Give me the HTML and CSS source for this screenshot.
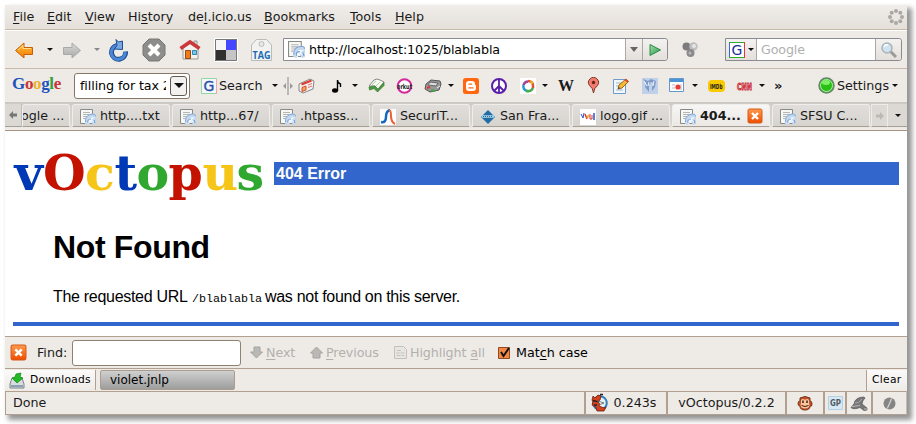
FILE: index.html
```html
<!DOCTYPE html>
<html lang="en">
<head>
<meta charset="utf-8">
<title>404 Error</title>
<link rel="stylesheet" href="styles.css">
</head>
<body>
<svg class="defs" width="0" height="0">
  <defs>
    <linearGradient id="orange" x2="0" y2="1"><stop stop-color="#ffc23d"/><stop offset="1" stop-color="#f57900"/></linearGradient>
    <linearGradient id="grey" x2="0" y2="1"><stop stop-color="#d8d8d6"/><stop offset="1" stop-color="#aaaaa8"/></linearGradient>
    <linearGradient id="green" x2="1" y2="1"><stop stop-color="#a3dfa8"/><stop offset="1" stop-color="#23974a"/></linearGradient>
    <linearGradient id="red" x2="0" y2="1"><stop stop-color="#ff9a4d"/><stop offset="1" stop-color="#ee4d00"/></linearGradient>
    <symbol id="page" viewBox="0 0 16 16">
      <path d="M.500.500h12v14H.500z" fill="#f7f7f5" stroke="#888a85"/>
      <path d="M3 3.500h7M3 5.500h7M3 7.500h4M3 9.500h2" stroke="#b5b5b3"/>
      <path d="M5 15q-1-8 5-10 4-1 6 2v8l-3 1-2-4-3 4z" fill="#c3d8ef"/>
      <path d="M5.500 13Q5 7 10 5.500t6 2" stroke="#84a9d4" fill="none"/>
      <path d="M9 9.500q3-2 6-1l-3 2 3 3.500-4-2-2 3-2-1z" fill="#f0f7fd"/><path d="M8 14q-1-4 3-4M14 11l1 3" stroke="#6f9ace" fill="none"/>
    </symbol>
    <symbol id="close" viewBox="0 0 16 16">
      <rect x="1" y="1" width="14" height="14" rx="1.500" fill="url(#red)" stroke="#d65a18"/>
      <path d="M5 5l6 6m0-6l-6 6" stroke="#fff" stroke-width="2.400"/>
    </symbol>
  </defs>
</svg>
<div class="window">
  <nav class="menu">
    <span><u>F</u>ile</span><span><u>E</u>dit</span><span><u>V</u>iew</span><span>Hi<u>s</u>tory</span><span>de<u>l</u>.icio.us</span><span><u>B</u>ookmarks</span><span><u>T</u>ools</span><span><u>H</u>elp</span>
    <svg width="16" height="16" viewBox="0 0 16 16"><g fill="#aaa8a5"><circle cx="8" cy="2" r="2"/><circle cx="12.300" cy="3.700" r="2"/><circle cx="14" cy="8" r="2"/><circle cx="12.300" cy="12.300" r="2"/><circle cx="8" cy="14" r="2"/><circle cx="3.700" cy="12.300" r="2"/><circle cx="2" cy="8" r="2"/><circle cx="3.700" cy="3.700" r="2"/></g></svg>
  </nav>

  <div class="toolbar">
    <svg width="22" height="20" viewBox="0 0 22 20"><path d="M1.500 10.500L10 3v4.500h8.500v7H10V18z" fill="url(#orange)" stroke="#c65f08"/><path d="M4 10l5-4.500v3h8" stroke="#ffdc8a" fill="none"/></svg>
    <i class="caret"></i>
    <svg width="22" height="20" viewBox="0 0 22 20"><path d="M18.500 10.500L10 3v4.500H1.500v7H10V18z" fill="url(#grey)" stroke="#a9a9a7"/></svg>
    <i class="caret dim"></i>
    <svg width="22" height="24" viewBox="0 0 22 24"><path d="M17.500 13.500A7 7 0 1 1 9 7.500" fill="none" stroke="#1d4e94" stroke-width="5"/><path d="M17.200 14A7 7 0 1 1 9 7.500" fill="none" stroke="#4c86d4" stroke-width="3"/><path d="M8 1.500l2.500 2.500 4-1v8.500L6.500 11l2.500-3.500z" fill="#7aa7e2" stroke="#1d4e94"/></svg>
    <svg width="24" height="24" viewBox="0 0 24 24"><path d="M7 1h10l6 6v10l-6 6H7l-6-6V7z" fill="#8d8d8b" stroke="#777775"/><path d="M7 7l10 10m0-10L7 17" stroke="#fff" stroke-width="4"/></svg>
    <svg width="22" height="24" viewBox="0 0 22 24"><path d="M4 10v11h15V10l-8-6z" fill="#f4f2ee" stroke="#999"/><path d="M15 3h3v5h-3z" fill="#ddd" stroke="#999"/><path d="M1.500 10.500L11 4l9.500 6.500" fill="none" stroke="#c9383b" stroke-width="3.600"/><path d="M6.500 12.500h5v8h-5z" fill="#ee7c19" stroke="#944a12"/><path d="M13.500 12.500h4v4h-4z" fill="#75c8ef" stroke="#3485b4"/></svg>
    <svg width="24" height="24" viewBox="0 0 24 24"><path d="M0 0h24v24H0z" fill="#fff"/><path d="M1 1h11v11H1z" fill="#f5f5f5"/><path d="M12 1h11v11H12z" fill="#4548ff"/><path d="M1 12h11v11H1z" fill="#303030"/><path d="M12 12h11v11H12z" fill="#c5c5c5"/><path d="M1.500 1.500h21v21h-21z" fill="none" stroke="#777"/></svg>
    <svg width="24" height="24" viewBox="0 0 24 24"><path d="M1.500 7l5-5.500h10l5 5.500v15.500h-20z" fill="#f2f2f1" stroke="#bbb"/><circle cx="11.500" cy="6" r="2.500" fill="#e8e8e6" stroke="#bbb"/><text x="2.500" y="20.500" class="tag-text" textLength="18" lengthAdjust="spacingAndGlyphs">TAG</text></svg>
    <div class="address">
      <svg width="17" height="17"><use href="#page"/></svg><span>http://localhost:1025/blablabla</span>
      <div class="button drop"><i class="caret grey-caret"></i></div>
      <div class="button go"><svg width="13" height="14" viewBox="0 0 13 14"><path d="M1 1.500l10.500 5.500L1 12.500z" fill="url(#green)" stroke="#2b8a45"/></svg></div>
    </div>
    <svg width="17" height="16" viewBox="0 0 17 16"><circle cx="4.500" cy="4.500" r="4" fill="#7c7c7c"/><circle cx="11.500" cy="4.500" r="4.200" fill="#bdbdbd"/><circle cx="8.500" cy="11" r="4" fill="#8a8a8a"/><circle cx="12" cy="4" r="2" fill="#e6e6e6"/><circle cx="8" cy="11" r="1.500" fill="#b8b8b8"/></svg>
    <div class="search">
      <div class="button engine"><svg width="16" height="16" viewBox="0 0 16 16"><path d="M0 0h16v16H0z" fill="#fff"/><path d="M.5 16V.5" stroke="#3b67d6"/><path d="M0 .5h16M0 15.500h16" stroke="#33a833"/><path d="M15.500 0v16" stroke="#e33"/><text x="8" y="13" class="g-letter">G</text></svg><i class="caret"></i></div>
      <span>Google</span>
      <div class="button find-button"><svg width="18" height="18" viewBox="0 0 18 18"><path d="M10 10l6 6" stroke="#999b98" stroke-width="3"/><circle cx="7" cy="7" r="5" fill="#cfe3ef" stroke="#a9b4ba" stroke-width="1.500"/><path d="M4 6q1-3 4-2" stroke="#fff" stroke-width="1.500" fill="none"/></svg></div>
    </div>
  </div>

  <div class="google-bar">
    <div class="google-logo"><b class="b">G</b><b class="r">o</b><b class="y">o</b><b class="b">g</b><b class="n">l</b><b class="r">e</b></div>
    <div class="query"><span>filling for tax 2</span><div class="combo"><i class="caret big"></i></div></div>
    <svg width="16" height="16" viewBox="0 0 16 16"><path d="M.5.500h15v15H.5z" fill="#f4f7fd" stroke="#91d99e"/><path d="M15.500 1v15" stroke="#f2a6a6"/><text x="8" y="13" class="g-letter soft">G</text></svg>
    <span>Search</span>
    <i class="caret"></i>
    <svg width="10" height="18" viewBox="0 0 10 18"><path d="M5 0v18" stroke="#888"/><path d="M3 6v6L0 9zM7 6v6l3-3z" fill="#999"/></svg>
    <svg width="17" height="16" viewBox="0 0 17 16"><path d="M1 6l11-5 4 2-1 8-10 4-4-2z" fill="#f1f1f1" stroke="#888"/><path d="M3.500 6.500l10-4" stroke="#dc3b2d" stroke-width="2"/><path d="M4 9.500l4-1.500v4l-4 1.500z" stroke="#dc4b3d" fill="#f0a94c"/><path d="M10 7l4-1.500M10 9.500l4-1.500" stroke="#e0726a"/></svg>
    <svg width="11" height="16" viewBox="0 0 11 16"><ellipse cx="3" cy="12.500" rx="3" ry="2.200"/><path d="M5.500 13V2q0 3 3 4v3" stroke="#000" stroke-width="1.400" fill="none"/></svg>
    <i class="caret"></i>
    <svg width="17" height="16" viewBox="0 0 17 16"><path d="M1 8l5-6q3-2 6 0l4 2-6 7-3-3z" fill="#f5faf1" stroke="#888"/><path d="M1 9l6-1 2.500 4L16 4.500v3L9.500 14 6 10.500 1.500 12z" fill="#44a23b" stroke="#38702e" stroke-width=".7"/><path d="M4 7l4-4m0 5l4-4" stroke="#b4cfaf" fill="none"/></svg>
    <svg width="17" height="16" viewBox="0 0 17 16"><circle cx="8.500" cy="8" r="6.800" fill="#fff" stroke="#d42a9b" stroke-width="2"/><text x="1" y="10.500" class="orkut" textLength="15" lengthAdjust="spacingAndGlyphs">orkut</text></svg>
    <svg width="18" height="16" viewBox="0 0 18 16"><path d="M2 6l5-4 9 1 1 3-2 6-9 2-5-3z" fill="#999" stroke="#555"/><path d="M6 4l8 1-2 3-8-1z" fill="#ddd" stroke="#666"/><path d="M3 10l3-1" stroke="#d33" stroke-width="2"/><path d="M7 12l4 1" stroke="#4a4" stroke-width="2"/><path d="M13 10l3-2" stroke="#eee"/></svg>
    <i class="caret"></i>
    <svg width="16" height="16" viewBox="0 0 16 16"><rect width="16" height="16" rx="2.500" fill="#ff6810"/><path d="M6 3h3q3 0 3 3 0 1 1 1.500v2.500q0 3-3 3H6q-3 0-3-3V6q0-3 3-3z" fill="#fff"/><path d="M6 6.200h2.700M6 9.900h4" stroke="#ff6810" stroke-width="1.300" stroke-linecap="round"/></svg>
    <svg width="16" height="16" viewBox="0 0 16 16"><circle cx="8" cy="8" r="7" fill="#fff" stroke="#5a1ea8" stroke-width="2"/><path d="M8 1v14M8 8l-5 5M8 8l5 5" stroke="#5a1ea8" stroke-width="1.800"/></svg>
    <svg width="16" height="16" viewBox="0 0 16 16"><path d="M0 0h16v16H0z" fill="#fff"/><path d="M8 3.500A5 5 0 0 0 3.500 7" stroke="#a2489a" stroke-width="2.500" fill="none"/><path d="M8 3q5 0 5 5v2" stroke="#df5131" stroke-width="2.500" fill="none"/><path d="M3.500 7q-1 5 4 6" stroke="#299ad0" stroke-width="2.500" fill="none"/><path d="M6 13q5 1 7-3" stroke="#4baa4b" stroke-width="2.500" fill="none"/><path d="M10 2l4 3-3 1z" fill="#f4c430"/></svg>
    <i class="caret"></i>
    <b class="wiki">W</b>
    <svg width="13" height="17" viewBox="0 0 13 17"><path d="M6.500 16Q6 11 2.500 8.500A5 5 0 1 1 10.500 8.500Q7 11 6.500 16z" fill="#f47a6c" stroke="#7c3730"/><circle cx="6.500" cy="5.500" r="1.700" fill="#60251d"/></svg>
    <svg width="16" height="16" viewBox="0 0 16 16"><path d="M.500 1.500h12v14H.500z" fill="#f2f7fc" stroke="#719bcd"/><path d="M3 5h6M3 8h4M3 12h7" stroke="#9fb7d1"/><path d="M5 11l1-4 7-6 2.500 2.500L9 10z" fill="#f7bb31" stroke="#98651a"/><path d="M12.500 1.500l2.500 2.500" stroke="#d94b3b" stroke-width="2"/><path d="M5 11l.5-2L7 10z" fill="#333"/></svg>
    <svg width="16" height="16" viewBox="0 0 16 16"><path d="M0 0h16v16H0z" fill="#bfd0e9"/><path d="M1 1l5 2 3-2 5 2-1 6-3 4V9l2-4-3-1-2 3v7l-4-5 1-4z" fill="#7f9bc8"/><path d="M2 3l3 5M7 4L6 8M12 3l-1 5" stroke="#edf3fa"/></svg>
    <svg width="16" height="15" viewBox="0 0 16 15"><path d="M.5.500h14v13H.5z" fill="#fff" stroke="#629acb"/><path d="M1 1h13v3H1z" fill="#4d94d6"/><path d="M3 7h3M3 10h3M12 6v6" stroke="#bbc"/><circle cx="9" cy="9" r="2.600" fill="#e53c37"/></svg>
    <i class="caret"></i>
    <svg width="17" height="12" viewBox="0 0 17 12"><rect width="17" height="12" rx="4" fill="#fac900"/><text x="2" y="8.500" class="imdb" textLength="12.500" lengthAdjust="spacingAndGlyphs">IMDb</text></svg>
    <svg width="17" height="12" viewBox="0 0 17 12"><text x="1" y="9.500" class="cnn" textLength="15" lengthAdjust="spacingAndGlyphs">CNN</text></svg>
    <i class="caret"></i>
    <b class="more">»</b>
    <svg width="17" height="17" viewBox="0 0 17 17"><circle cx="8.500" cy="8.500" r="7.500" fill="#29bf16" stroke="#67866a" stroke-width="1.500"/><circle cx="8.500" cy="8.500" r="6" fill="none" stroke="#b3ecab"/><ellipse cx="8" cy="5.500" rx="4" ry="2.500" fill="#7ef064"/></svg>
    <span>Settings</span>
    <i class="caret"></i>
  </div>

  <div class="tabs">
    <div class="scroll left"><svg width="9" height="8" viewBox="0 0 9 8"><path d="M0 4l4-4v2.500h4v3H4V8z" fill="#777"/></svg></div>
    <div class="tab first"><span>ogle ...</span></div>
    <div class="tab"><svg width="16" height="16"><use href="#page"/></svg><span>http....txt</span></div>
    <div class="tab"><svg width="16" height="16"><use href="#page"/></svg><span>http...67/</span></div>
    <div class="tab"><svg width="16" height="16"><use href="#page"/></svg><span>.htpass...</span></div>
    <div class="tab"><svg width="16" height="16" viewBox="0 0 16 16"><path d="M0 0h16v16H0z" fill="#fff"/><path d="M1 13Q6 14 6 8t4-7" stroke="#1669bd" stroke-width="2.500" fill="none"/><path d="M9 1q2 0 2 6t4 8" stroke="#ec6033" stroke-width="2" fill="none"/></svg><span>SecuriT...</span></div>
    <div class="tab"><svg width="16" height="16" viewBox="0 0 16 16"><path d="M8 1l7 7-7 7-7-7z" fill="#236ca3" stroke="#76a5c7"/><path d="M2 7.500h12" stroke="#a8d3e9" stroke-width="2.500"/><path d="M3 7.500h10" stroke="#316f9b" stroke-dasharray="1 1"/></svg><span>San Fra...</span></div>
    <div class="tab"><svg width="16" height="16" viewBox="0 0 16 16"><path d="M0 0h16v16H0z" fill="#fff"/><path d="M1 5l2 4 1-5" stroke="#2555cb" fill="none"/><path d="M5 5l2 5" stroke="#d33" stroke-width="1.500"/><path d="M7 9l2-3" stroke="#efaf25" stroke-width="2"/><path d="M10 5v5h2V6" stroke="#d33" fill="none"/><path d="M14 4v7" stroke="#2555cb" stroke-width="1.500"/></svg><span>logo.gif ...</span></div>
    <div class="tab active"><svg width="16" height="16"><use href="#page"/></svg><span>404...</span><svg class="shut" width="16" height="16"><use href="#close"/></svg></div>
    <div class="tab"><svg width="16" height="16"><use href="#page"/></svg><span>SFSU C...</span></div>
    <div class="scroll right"><svg width="9" height="8" viewBox="0 0 9 8"><path d="M9 4L5 0v2.500H1v3h4V8z" fill="#bcb9b5"/></svg></div>
    <div class="scroll all"><i class="caret"></i></div>
  </div>

  <main class="page">
    <header>
      <svg width="261" height="62" viewBox="0 0 261 62"><text y="51" class="brand"><tspan x="1.500" fill="#0039b6">v</tspan><tspan x="30" fill="#c41200">O</tspan><tspan x="72" fill="#f5c518">c</tspan><tspan x="101.500" fill="#0039b6">t</tspan><tspan x="123.500" fill="#30a72f">o</tspan><tspan x="155.500" fill="#c41200">p</tspan><tspan x="189.500" fill="#f5c518">u</tspan><tspan x="223.500" fill="#30a72f">s</tspan></text></svg>
      <div class="error-title">404 Error</div>
    </header>
    <section>
      <h1>Not Found</h1>
      <p><span class="lead">The requested URL</span><code>/blablabla</code><span class="tail">was not found on this server.</span></p>
    </section>
    <div class="rule"></div>
  </main>

  <div class="findbar">
    <svg width="17" height="17"><use href="#close"/></svg>
    <span>Find:</span>
    <div class="field"></div>
    <svg width="13" height="13" viewBox="0 0 13 13"><path d="M4 1h6v5h2.500l-6 6-6-6H4z" fill="#bab8b5" stroke="#a5a3a0"/></svg>
    <span class="off"><u>N</u>ext</span>
    <svg width="13" height="13" viewBox="0 0 13 13"><path d="M3 12h7V7h2.500l-6-6-6 6H3z" fill="#bab8b5" stroke="#a5a3a0"/></svg>
    <span class="off"><u>P</u>revious</span>
    <svg width="13" height="13" viewBox="0 0 13 13"><path d="M.5.500h9l3 3v9H.5z" fill="#e8e6e3" stroke="#c3c1be"/><path d="M3 4.500h4M2.500 7h3m1 0h4M2.500 9.500h4m1 0h3" stroke="#c4c2bf"/></svg>
    <span class="off">Highlight <u>a</u>ll</span>
    <svg width="14" height="14" viewBox="0 0 14 14"><path d="M.500 1.500h11v11H.500z" fill="#f58744" stroke="#8f4a25"/><path d="M3 6l2.500 4 5.500-8" stroke="#111" stroke-width="2" fill="none"/></svg>
    <span>Mat<u>c</u>h case</span>
  </div>

  <div class="downloads">
    <div class="label"><svg width="16" height="17" viewBox="0 0 16 17"><path d="M3 6h10l2 6v4H1v-4z" fill="#d8dcde" stroke="#7f8487"/><path d="M2 13h12v2H2z" fill="#8aa2b8"/><path d="M3 6l3-1 1-3 5-1-1 4 3 1-6 5z" fill="#21bb26" stroke="#138518" stroke-width=".7"/></svg><span>Downloads</span></div>
    <div class="file">violet.jnlp</div>
    <div class="clear">Clear</div>
  </div>

  <footer class="status">
    <div>Done</div>
    <div><svg width="17" height="20" viewBox="0 0 17 20"><circle cx="9" cy="10" r="6.800" fill="#e5f1f8" stroke="#347fb8" stroke-width="2"/><path d="M2 3l2 2 3-3 3 1-1 4-3 2 3 1-1 3 5 2 2-1-2 4H6l-1-4-4-2 1-3-1-2z" fill="#d8401a" stroke="#671d12" stroke-width=".8"/><path d="M7 8l6 2-4 1.500z" fill="#f9f6e7" stroke="#333" stroke-width=".6"/><path d="M9 1.500h3M2 7.500l4 1M3 12h3" stroke="#222" stroke-width="1.500"/></svg><span>0.243s</span></div>
    <div><span>vOctopus/0.2.2</span></div>
    <div><svg width="16" height="15" viewBox="0 0 16 15"><path d="M3 2q5-3 10 0v3q2 0 2 3t-2 2q0 4-5 4t-5-4Q1 10 1 7.500T3 5z" fill="#c0532b" stroke="#79331c"/><path d="M4 4q2-2 4 0 2-2 4 0v3q2 5-4 5.500Q2 12 4 7z" fill="#ffc39a"/><path d="M6 4.500v2.500m4-2.500v2.500" stroke="#111" stroke-width="1.300"/><path d="M4.500 9.500q3.500 2 7 0" stroke="#3d1b12" fill="none"/></svg></div>
    <div><svg width="15" height="14" viewBox="0 0 15 14"><path d="M0 0h15v14H0z" fill="#d5e8f4"/><path d="M.5.500h14v13H.5z" fill="none" stroke="#b4d0e2"/><text x="2" y="10" class="gp" textLength="11" lengthAdjust="spacingAndGlyphs">GP</text></svg></div>
    <div><svg width="18" height="15" viewBox="0 0 18 15"><path d="M4 8Q5 1 14 1l1 1q-3 3-3 6l5 4v2l-3 .500-4-3q-7 2.500-9 0z" fill="#777" stroke="#555" stroke-width=".7"/><path d="M5 7q4 1 7-4" stroke="#aaa" fill="none"/><path d="M2 10.500l8-1M14 13l3 0" stroke="#bbb"/></svg></div>
    <div><svg width="13" height="13" viewBox="0 0 13 13"><circle cx="6.500" cy="6.500" r="6" fill="#858585"/><path d="M8.700 1.500L4.300 11.500" stroke="#d1cfcc" stroke-width="1.300"/></svg></div>
  </footer>
</div>
</body>
</html>
```
FILE: styles.css
```css
* { box-sizing: border-box; }
body {
  margin: 0;
  padding: 5px 0 0 5px;
  height: 424px;
  overflow: hidden;
  background: #fff;
  color: #1a1a1a;
  font: 12.7px/16px "DejaVu Sans", sans-serif;
}
svg { display: block; flex: none; }
.defs { position: absolute; }
u { text-decoration: underline; text-underline-offset: 2px; text-decoration-thickness: 1px; }
.window {
  width: 902px;
  height: 410px;
  background: #eeebe7;
  box-shadow: 4px 4px 5px 1px rgba(0, 0, 0, .42);
}
span { white-space: nowrap; }

.menu {
  display: grid;
  grid-template-columns: 34px 38px 43px 60px 76px 86px 45px 493px 16px;
  align-items: center;
  height: 25px;
  padding-left: 8px;
  background: linear-gradient(#f0edea, #e5dfd9);
  border-bottom: 1px solid #c9bbac;
}

.caret {
  width: 0;
  height: 0;
  border: 3px solid transparent;
  border-top: 3px solid #111;
  border-bottom: 0;
}
.caret.dim { border-top-color: #888; }
.caret.grey-caret { border-width: 5px 4px 0; border-top-color: #666; }
.caret.big { border-width: 5px 5px 0; }

.toolbar {
  display: grid;
  grid-template-columns: 33px 15px 32px 14px 34px 37px 35px 36px 33px 399px 43px 177px;
  align-items: center;
  height: 39px;
  padding-left: 9px;
  border-top: 1px solid #fff;
  border-bottom: 1px solid #c9bbac;
}
.tag-text { font: bold 10px "Open Sans", sans-serif; fill: #1769b5; }
.address, .search {
  display: flex;
  align-items: center;
  height: 23px;
  background: #fff;
  border: 1px solid #8a8a92;
  border-radius: 0 3px 3px 0;
  color: #000;
}
.address { width: 385px; padding-left: 4px; }
.address > span { margin-left: 4px; flex: 1; letter-spacing: -.12px; }
.button {
  display: flex;
  align-items: center;
  justify-content: center;
  height: 21px;
  background: linear-gradient(#f4f2f0, #e3dfdb);
  border-left: 1px solid #aaa7a5;
}
.drop { width: 17px; }
.go { width: 25px; border-radius: 0 3px 3px 0; }
.search { width: 177px; }
.search > span { flex: 1; color: #b0b0b0; padding-left: 4px; letter-spacing: -.15px; }
.engine { width: 31px; gap: 3px; border-left: 0; border-right: 1px solid #aaa7a5; }
.find-button { width: 26px; border-radius: 0 3px 3px 0; }
.g-letter { font: 14px "DejaVu Sans", sans-serif; fill: #142e9c; text-anchor: middle; }
.soft { fill: #2c52a8; font-size: 14px; stroke: #2c52a8; stroke-width: .4px; }

.google-bar {
  display: grid;
  grid-template-columns: 62px 127px 18px 53px 11px 15px 34px 20px 16px 28px 28px 24px 15px 28px 29px 22px 16px 29px 26px 29px 27px 23px 16px 28px 23px 15px 44px 19px 55px 6px;
  align-items: center;
  height: 33px;
  padding-left: 7px;
}
.google-logo { font: 17px/20px "Liberation Serif", serif; white-space: nowrap; letter-spacing: -.35px; padding-bottom: 4px; }
.google-logo b { font-weight: bold; }
.b { color: #2053bd; }
.r { color: #cb3238; }
.y { color: #e8b32c; }
.n { color: #369f42; }
.query {
  display: flex;
  align-items: center;
  width: 116px;
  height: 26px;
  background: #fff;
  border: 1px solid #857668;
  border-radius: 3px;
  color: #000;
}
.query > span { margin-left: 5px; width: 86px; overflow: hidden; letter-spacing: -.1px; }
.combo {
  display: flex;
  align-items: center;
  justify-content: center;
  width: 17px;
  height: 20px;
  margin-left: 4px;
  flex: none;
  border: 1px solid #625a52;
  border-radius: 3px;
  background: #f3f1ef;
}
.orkut { font: bold 7px "DejaVu Sans", sans-serif; fill: #222; }
.imdb { font: bold 7px "DejaVu Sans", sans-serif; fill: #222; }
.cnn { font: bold 9.5px "DejaVu Sans", sans-serif; fill: #f6b5b5; stroke: #c82b36; stroke-width: 1px; }
.wiki { font: bold 16px/16px "Liberation Serif", serif; }
.more { font-size: 13px; }

.tabs {
  display: grid;
  grid-template-columns: 17px 49px repeat(8, 100px) 17px 19px;
  align-items: end;
  height: 29px;
  padding-top: 2px;
  background: linear-gradient(#cac6c2, #d4d0cc 5px, #d9d5d1 22px, #eeebe7 26px);
  border-bottom: 1px solid #a79582;
}
.tab {
  display: flex;
  align-items: center;
  width: 98px;
  height: 23px;
  margin: 0 0 3px 1px;
  padding-left: 7px;
  gap: 4px;
  background: linear-gradient(#e0ddda, #d7d4d0);
  border: 1px solid #f0eeeb;
  border-bottom: 1px solid #a79e95;
  border-radius: 3px 3px 0 0;
}
.tab svg { position: relative; top: 1px; }
.tab.first { width: 48px; margin-left: 0; padding: 0; overflow: hidden; }
.tab.first span { margin-left: -2px; }
.tab.active { background: linear-gradient(#f7f6f4, #ebe8e5); font-weight: bold; }
.tab.active span { width: 43px; }
.tab .shut { top: 0; }
.scroll {
  display: flex;
  align-items: center;
  justify-content: center;
  height: 23px;
  margin-bottom: 3px;
  background: #dcd9d5;
  border-right: 1px solid #c0bcb7;
  border-bottom: 1px solid #a79e95;
}
.scroll.all { border-right: 0; }
.scroll.right { border: 1px solid #eeebe8; border-bottom-color: #a79e95; }

.page { height: 205px; background: #fff; color: #000; overflow: hidden; padding-left: 8px; font-family: "Liberation Sans", Arial, sans-serif; }
.page header { display: flex; height: 62px; margin-top: 8px; }
.brand { font: bold 49px "DejaVu Serif", serif; }
.error-title {
  width: 625px;
  height: 23px;
  margin-top: 23px;
  padding-left: 2px;
  background: #3366cc;
  color: #fff;
  font: bold 16px/23px "Liberation Sans", sans-serif;
}
.page section { padding: 27px 0 0 40px; height: 121px; }
h1 { margin: 0; font: bold 32px/38px "Liberation Sans", sans-serif; letter-spacing: -.35px; }
p { display: grid; grid-template-columns: 139px 73px 1fr; align-items: baseline; margin: 21px 0 0; font-size: 16px; line-height: 20px; }
code { font: 11.7px "Liberation Mono", monospace; }
.lead, .tail { letter-spacing: -.3px; }
.rule { width: 886px; height: 4px; background: #3366cc; }

.findbar {
  display: grid;
  grid-template-columns: 27px 35px 178px 16px 44px 16px 68px 16px 88px 18px 80px;
  align-items: center;
  height: 32px;
  padding-left: 5px;
  border-top: 1px solid #b1a08f;
}
.findbar .field { width: 169px; height: 26px; background: #fff; border: 1px solid #8f8071; border-radius: 3px; }
.off { color: #b2b0ad; letter-spacing: -.1px; }
.findbar > span:last-child { color: #000; }

.downloads {
  display: flex;
  align-items: center;
  height: 23px;
  border-top: 1px solid #b1a08f;
}
.label {
  display: flex;
  align-items: center;
  gap: 5px;
  width: 91px;
  height: 20px;
  padding-left: 4px;
  border-right: 1px solid #b1a08f;
  background: linear-gradient(#fbfaf9, #eeebe7);
  font-size: 10.7px;
  letter-spacing: .25px;
  color: #000;
}
.file {
  width: 135px;
  height: 20px;
  margin-left: 4px;
  padding-left: 9px;
  border: 1px solid #aa9c8e;
  border-radius: 2px;
  background: linear-gradient(#d0d0d0, #9d9d9d);
  color: #000;
  font-size: 12px;
  line-height: 18px;
}
.clear {
  width: 41px;
  height: 21px;
  margin-left: auto;
  padding-left: 5px;
  border-left: 1px solid #b1a08f;
  background: linear-gradient(#fbfaf9, #eeebe7);
  font-size: 10.7px;
  letter-spacing: .3px;
  line-height: 19px;
  color: #000;
}

.status {
  display: grid;
  grid-template-columns: 580px 82px 119px 38px 22px 26px 33px;
  height: 24px;
  border: 1px solid #b1a08f;
  border-right-color: #c9bbac;
}
.status > div {
  display: flex;
  align-items: center;
  justify-content: center;
  gap: 6px;
  border-right: 2px solid #b1a08f;
}
.status > div:nth-child(2) { padding-right: 5px; }
.status > div:first-child { justify-content: flex-start; padding-left: 7px; }
.status > div:last-child { border: 0; }
.gp { font: bold 8px "DejaVu Sans", sans-serif; fill: #4f5960; }
```
